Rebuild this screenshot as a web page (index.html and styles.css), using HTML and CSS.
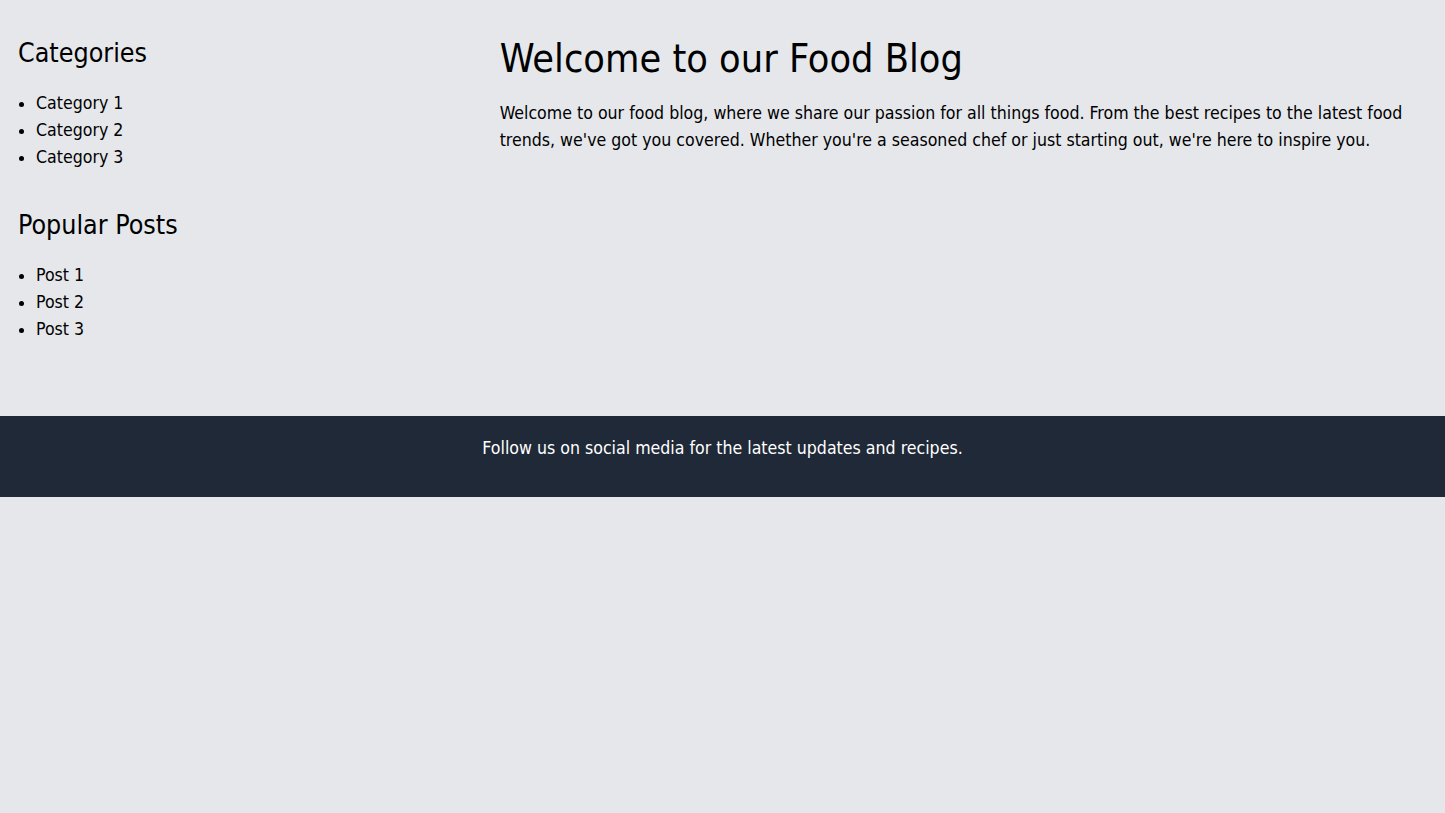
FILE: index.html
```html
<!DOCTYPE html>
<html lang="en">
<head>
    <meta charset="UTF-8">
    <meta name="viewport" content="width=device-width, initial-scale=1.0">
    <title>Food Blog</title>
    <link rel="stylesheet" href="styles.css">
</head>
<body>
    <div class="layout">
        <!-- Sidebar -->
        <aside class="sidebar">
            <h2>Categories</h2>
            <ul>
                <li>Category 1</li>
                <li>Category 2</li>
                <li>Category 3</li>
            </ul>

            <h2>Popular Posts</h2>
            <ul>
                <li>Post 1</li>
                <li>Post 2</li>
                <li>Post 3</li>
            </ul>
        </aside>

        <!-- Main content -->
        <main class="content">
            <h1>Welcome to our Food Blog</h1>
            <p>Welcome to our food blog, where we share our passion for all things food. From the best recipes to the latest food trends, we've got you covered. Whether you're a seasoned chef or just starting out, we're here to inspire you.</p>
        </main>
    </div>

    <footer class="footer">
        <p>Follow us on social media for the latest updates and recipes.</p>
    </footer>
</body>
</html>
```

FILE: styles.css
```css
body {
    margin: 0;
    background: #e5e7eb;
    color: #000;
    font-family: "DejaVu Sans Condensed", "DejaVu Sans", sans-serif;
    font-stretch: condensed;
    font-size: 17.6px;
    line-height: 27px;
}

.layout {
    display: flex;
    padding: 19px 0 21px;
}

.sidebar {
    width: 33.333%;
    padding: 16px 18px;
    box-sizing: border-box;
}

.content {
    width: 66.667%;
    padding: 16px 16px 16px 18px;
    box-sizing: border-box;
}

h1 {
    font-size: 39.3px;
    line-height: 48px;
    font-weight: 400;
    margin: 0 0 17px;
}

h2 {
    font-size: 26.6px;
    line-height: 36px;
    font-weight: 400;
    margin: 0 0 19px;
}

ul {
    margin: 0 0 36px;
    padding-left: 18px;
}

p {
    margin: 0;
}

.footer {
    background: #1f2937;
    color: #fff;
    text-align: center;
    padding: 19px 16px 35px;
}
```
